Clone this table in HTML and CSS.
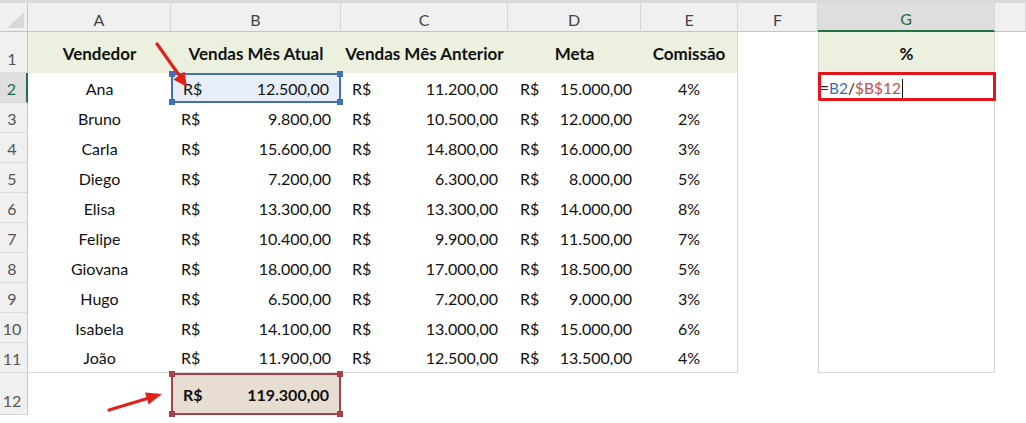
FILE: index.html
```html
<!DOCTYPE html>
<html lang="pt-BR">
<head>
<meta charset="utf-8">
<title>Planilha</title>
<link rel="stylesheet" href="styles.css">
</head>
<body>
<div class="sheet">
  <div class="topband"></div>
  <div class="row colhdr">
    <div class="corner"><span class="tri"></span></div>
    <div class="ch">A</div>
    <div class="ch">B</div>
    <div class="ch">C</div>
    <div class="ch">D</div>
    <div class="ch">E</div>
    <div class="ch">F</div>
    <div class="ch sel">G</div>
    <div class="ch"></div>
  </div>

  <div class="row r1">
    <div class="rh">1</div>
    <div class="c ctr hd green">Vendedor</div>
    <div class="c ctr hd green">Vendas Mês Atual</div>
    <div class="c ctr hd green">Vendas Mês Anterior</div>
    <div class="c ctr hd green">Meta</div>
    <div class="c ctr hd green e">Comissão</div>
    <div class="c"></div>
    <div class="c ctr hd green g">%</div>
    <div class="c"></div>
  </div>

  <div class="row rd">
    <div class="rh rsel">2</div>
    <div class="c ctr">Ana</div>
    <div class="c acc b ref-blue"><span>R$</span><span>12.500,00</span><i class="k tl"></i><i class="k tr"></i><i class="k bl"></i><i class="k br"></i></div>
    <div class="c acc cc"><span>R$</span><span>11.200,00</span></div>
    <div class="c acc d"><span>R$</span><span>15.000,00</span></div>
    <div class="c ctr e">4%</div>
    <div class="c"></div>
    <div class="c g edit"><span class="formula">=<span class="fb">B2</span>/<span class="fr">$B$12</span><span class="caret"></span></span><span class="mark"></span></div>
    <div class="c"></div>
  </div>

  <div class="row rd">
    <div class="rh">3</div>
    <div class="c ctr">Bruno</div>
    <div class="c acc b"><span>R$</span><span>9.800,00</span></div>
    <div class="c acc cc"><span>R$</span><span>10.500,00</span></div>
    <div class="c acc d"><span>R$</span><span>12.000,00</span></div>
    <div class="c ctr e">2%</div>
    <div class="c"></div>
    <div class="c g"></div>
    <div class="c"></div>
  </div>

  <div class="row rd">
    <div class="rh">4</div>
    <div class="c ctr">Carla</div>
    <div class="c acc b"><span>R$</span><span>15.600,00</span></div>
    <div class="c acc cc"><span>R$</span><span>14.800,00</span></div>
    <div class="c acc d"><span>R$</span><span>16.000,00</span></div>
    <div class="c ctr e">3%</div>
    <div class="c"></div>
    <div class="c g"></div>
    <div class="c"></div>
  </div>

  <div class="row rd">
    <div class="rh">5</div>
    <div class="c ctr">Diego</div>
    <div class="c acc b"><span>R$</span><span>7.200,00</span></div>
    <div class="c acc cc"><span>R$</span><span>6.300,00</span></div>
    <div class="c acc d"><span>R$</span><span>8.000,00</span></div>
    <div class="c ctr e">5%</div>
    <div class="c"></div>
    <div class="c g"></div>
    <div class="c"></div>
  </div>

  <div class="row rd">
    <div class="rh">6</div>
    <div class="c ctr">Elisa</div>
    <div class="c acc b"><span>R$</span><span>13.300,00</span></div>
    <div class="c acc cc"><span>R$</span><span>13.300,00</span></div>
    <div class="c acc d"><span>R$</span><span>14.000,00</span></div>
    <div class="c ctr e">8%</div>
    <div class="c"></div>
    <div class="c g"></div>
    <div class="c"></div>
  </div>

  <div class="row rd">
    <div class="rh">7</div>
    <div class="c ctr">Felipe</div>
    <div class="c acc b"><span>R$</span><span>10.400,00</span></div>
    <div class="c acc cc"><span>R$</span><span>9.900,00</span></div>
    <div class="c acc d"><span>R$</span><span>11.500,00</span></div>
    <div class="c ctr e">7%</div>
    <div class="c"></div>
    <div class="c g"></div>
    <div class="c"></div>
  </div>

  <div class="row rd">
    <div class="rh">8</div>
    <div class="c ctr">Giovana</div>
    <div class="c acc b"><span>R$</span><span>18.000,00</span></div>
    <div class="c acc cc"><span>R$</span><span>17.000,00</span></div>
    <div class="c acc d"><span>R$</span><span>18.500,00</span></div>
    <div class="c ctr e">5%</div>
    <div class="c"></div>
    <div class="c g"></div>
    <div class="c"></div>
  </div>

  <div class="row rd">
    <div class="rh">9</div>
    <div class="c ctr">Hugo</div>
    <div class="c acc b"><span>R$</span><span>6.500,00</span></div>
    <div class="c acc cc"><span>R$</span><span>7.200,00</span></div>
    <div class="c acc d"><span>R$</span><span>9.000,00</span></div>
    <div class="c ctr e">3%</div>
    <div class="c"></div>
    <div class="c g"></div>
    <div class="c"></div>
  </div>

  <div class="row rd">
    <div class="rh">10</div>
    <div class="c ctr">Isabela</div>
    <div class="c acc b"><span>R$</span><span>14.100,00</span></div>
    <div class="c acc cc"><span>R$</span><span>13.000,00</span></div>
    <div class="c acc d"><span>R$</span><span>15.000,00</span></div>
    <div class="c ctr e">6%</div>
    <div class="c"></div>
    <div class="c g"></div>
    <div class="c"></div>
  </div>

  <div class="row rd last">
    <div class="rh">11</div>
    <div class="c ctr bt">João</div>
    <div class="c acc b bt"><span>R$</span><span>11.900,00</span></div>
    <div class="c acc cc bt"><span>R$</span><span>12.500,00</span></div>
    <div class="c acc d bt"><span>R$</span><span>13.500,00</span></div>
    <div class="c ctr e bt">4%</div>
    <div class="c"></div>
    <div class="c g bt"></div>
    <div class="c"></div>
  </div>

  <div class="row r12">
    <div class="rh">12</div>
    <div class="c"></div>
    <div class="c acc b total ref-red"><span>R$</span><span>119.300,00</span><i class="k tl"></i><i class="k tr"></i><i class="k bl"></i><i class="k br"></i></div>
    <div class="c"></div>
    <div class="c"></div>
    <div class="c"></div>
    <div class="c"></div>
    <div class="c"></div>
    <div class="c"></div>
  </div>

  <svg class="arrows" width="1026" height="423" viewBox="0 0 1026 423" aria-hidden="true">
    <line x1="157" y1="44" x2="179" y2="75" stroke="#e3211b" stroke-width="3.2" stroke-linecap="round"/>
    <polygon points="187,87 184.5,71.5 173.5,79.5" fill="#e3211b"/>
    <line x1="109" y1="410" x2="149" y2="398" stroke="#e3211b" stroke-width="3.2" stroke-linecap="round"/>
    <polygon points="162,394 145,392.5 148.5,404.5" fill="#e3211b"/>
  </svg>
</div>
</body>
</html>
```

FILE: styles.css
```css
* { box-sizing: border-box; }

html, body {
  margin: 0;
  background: #ffffff;
}

body {
  font-family: Lato, "Open Sans", "Noto Sans", sans-serif;
  font-size: 16px;
  color: #111;
}

.sheet {
  position: relative;
  width: 1026px;
  height: 423px;
  overflow: hidden;
}

.topband {
  height: 3px;
  background: #dadada;
}

.row {
  display: grid;
  grid-template-columns: 28px 143px 170px 167px 133px 97px 80px 177px 1fr;
}

/* column header */
.colhdr { height: 29px; }

.corner {
  position: relative;
  background: #f0f0f0;
  border-right: 1px solid #c8c8c8;
  border-bottom: 1px solid #c4c4c4;
}

.tri {
  position: absolute;
  right: 3px;
  bottom: 3px;
  width: 17px;
  height: 16px;
  background: #d9d9d9;
  clip-path: polygon(100% 0, 100% 100%, 0 100%);
}

.ch {
  display: flex;
  align-items: center;
  justify-content: center;
  padding-top: 4px;
  background: #f0f0f0;
  color: #444;
  border-right: 1px solid #d6d6d6;
  border-bottom: 1px solid #c4c4c4;
  font-size: 16px;
}

.ch.sel {
  background: #dedede;
  color: #1f6b3e;
  border-bottom: 2px solid #217346;
}

/* row header */
.rh {
  display: flex;
  align-items: flex-end;
  justify-content: center;
  padding: 0 3px 4px 0;
  background: #f0f0f0;
  color: #555;
  border-right: 1px solid #c8c8c8;
  border-bottom: 1px solid #dadada;
  font-size: 16px;
}

.rh.rsel {
  background: #dedede;
  color: #1f6b3e;
  border-right: 2px solid #217346;
}

.r1 { height: 41px; }
.rd { height: 30px; }
.r12 { height: 42px; }

/* cells */
.c {
  display: flex;
  align-items: center;
  white-space: nowrap;
}

.ctr { justify-content: center; }

.hd {
  font-weight: 700;
  font-size: 17px;
}

.green { background: #ebf1de; }

.acc { justify-content: space-between; }
.acc.b { padding: 0 10px 0 10px; }
.acc.cc { padding: 0 10px 0 11px; }
.acc.d { padding: 0 9px 0 12px; }

.e { border-right: 1px solid #d4d4d4; }
.g { border-left: 1px solid #d4d4d4; border-right: 1px solid #d4d4d4; }
.bt { border-bottom: 1px solid #d4d4d4; }

.r1 .c { padding-top: 1px; }

/* formula reference highlights */
.ref-blue {
  position: relative;
  background: #e8eef8;
  border: 2px solid #4470b8;
}

.ref-blue .k { background: #4470b8; }

.ref-red {
  position: relative;
  background: #e7ddd0;
  border: 2px solid #a7414c;
  padding-bottom: 1px;
}

.ref-red .k { background: #a7414c; }

.total { font-weight: 700; }

.k {
  position: absolute;
  width: 6px;
  height: 6px;
}
.k.tl { left: -4px; top: -4px; }
.k.tr { right: -4px; top: -4px; }
.k.bl { left: -4px; bottom: -4px; }
.k.br { right: -4px; bottom: -4px; }

/* G2 cell being edited */
.edit {
  position: relative;
  border-left: none;
  padding-left: 2px;
}

.formula {
  position: relative;
  z-index: 2;
  display: inline-flex;
  align-items: center;
  color: #222;
  font-size: 15.5px;
}

.fb { color: #3d6cb7; }
.fr { color: #c0504d; }

.caret {
  display: inline-block;
  width: 1px;
  height: 19px;
  margin-left: 1px;
  background: #111;
}

.mark {
  position: absolute;
  left: 0;
  right: -2px;
  top: -1px;
  bottom: 2px;
  border: 3px solid #e2141c;
  border-radius: 1px;
  z-index: 1;
}

.arrows {
  position: absolute;
  left: 0;
  top: 0;
  pointer-events: none;
}
```
